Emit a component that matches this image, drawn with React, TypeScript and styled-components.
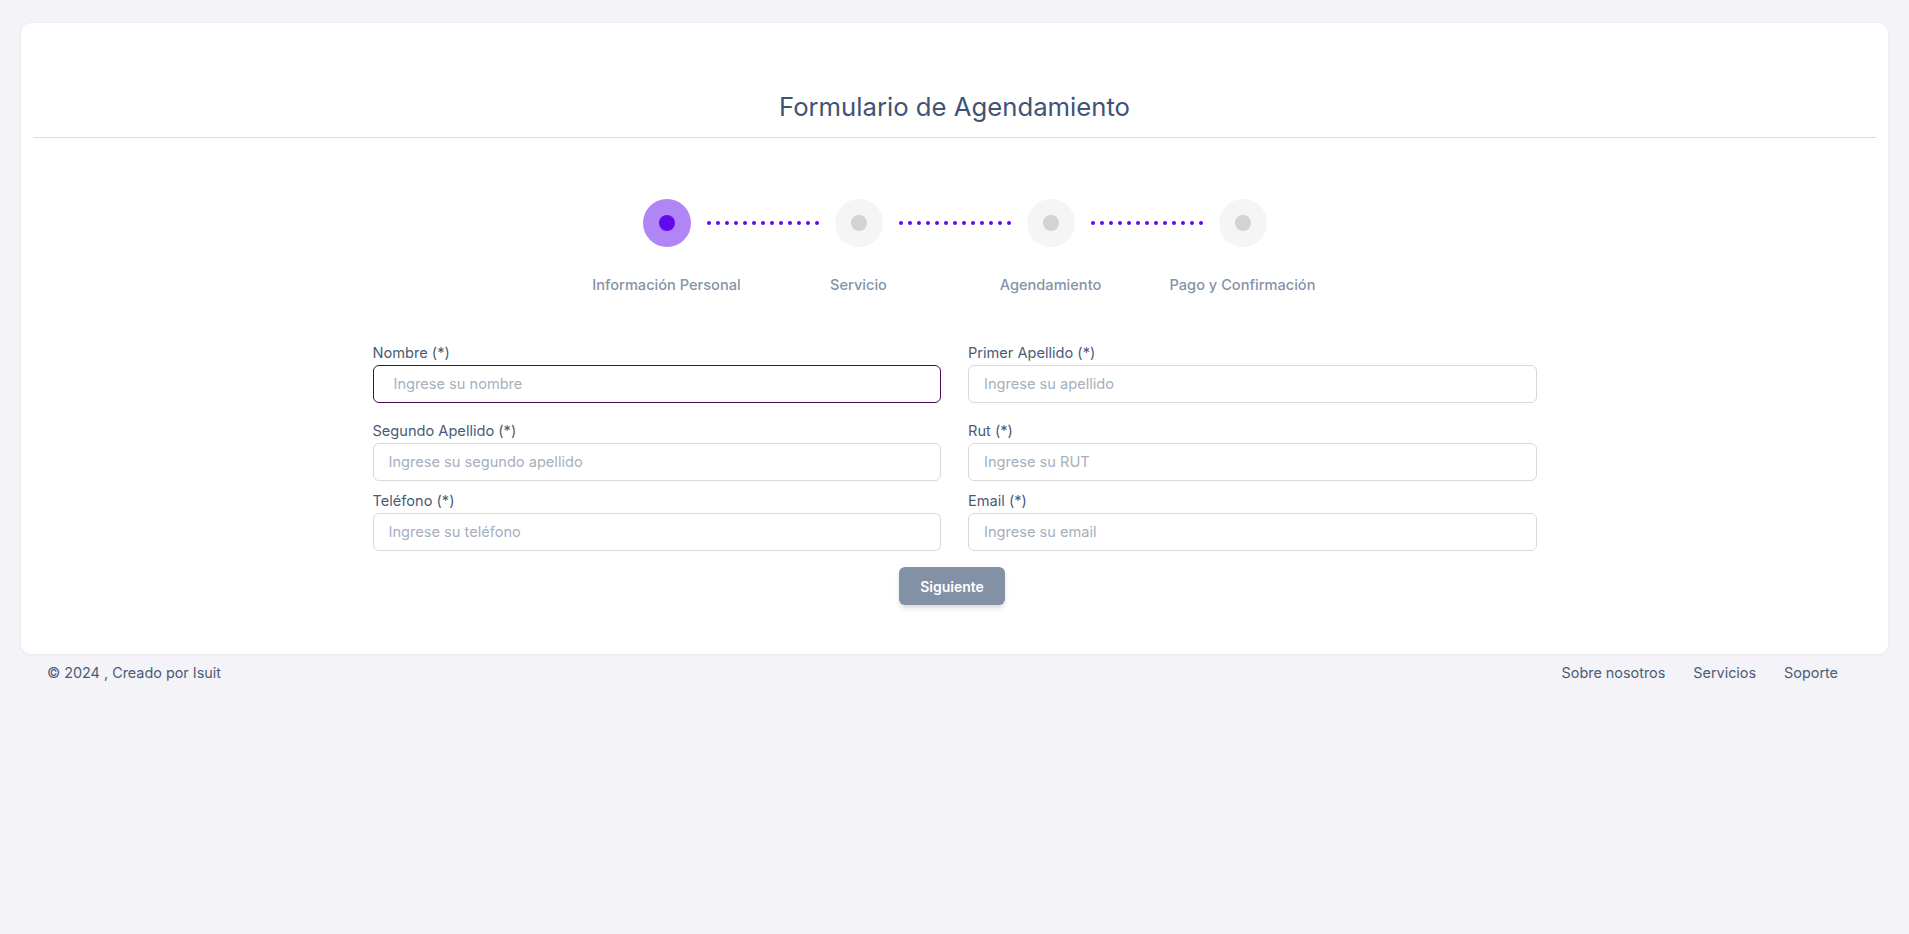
import React from "react";
import styled, { createGlobalStyle } from "styled-components";

const GlobalStyle = createGlobalStyle`
  html, body {
    margin: 0;
    padding: 0;
    background: #f3f3f8;
    font-family: Inter, "Noto Sans", "Liberation Sans", sans-serif;
  }
  * { box-sizing: border-box; }
`;

const Page = styled.div`
  min-height: 934px;
  padding: 23px 21px 0 21px;
  background: #f3f3f8;
`;

const Card = styled.main`
  background: #ffffff;
  border-radius: 10px;
  box-shadow: 0 1px 4px rgba(30, 40, 80, 0.06);
  padding: 67px 12px 49px 12px;
  display: flex;
  flex-direction: column;
  align-items: center;
`;

const Title = styled.h1`
  margin: 0 0 13px 0;
  font-size: 25.7px;
  line-height: 34px;
  font-weight: 400;
  color: #3f5475;
  text-align: center;
`;

const Divider = styled.hr`
  width: 100%;
  margin: 0;
  border: none;
  border-top: 1px solid #dcdde0;
`;

const StepperRow = styled.div`
  margin-top: 61px;
  display: flex;
  align-items: center;
`;

const StepCircle = styled.div<{ $active?: boolean }>`
  width: 48px;
  height: 48px;
  border-radius: 50%;
  background: ${(p) => (p.$active ? "#b086f6" : "#f5f5f6")};
  display: flex;
  align-items: center;
  justify-content: center;
`;

const StepDot = styled.div<{ $active?: boolean }>`
  width: 16px;
  height: 16px;
  border-radius: 50%;
  background: ${(p) => (p.$active ? "#6209ee" : "#d3d3d3")};
`;

const Connector = styled.div`
  width: 112px;
  margin: 0 16px;
  display: flex;
  justify-content: space-between;
  align-items: center;
`;

const ConnectorDot = styled.span`
  width: 4px;
  height: 4px;
  border-radius: 50%;
  background: #6408ef;
`;

const StepLabels = styled.div`
  margin-top: 28px;
  display: grid;
  grid-template-columns: repeat(4, 192px);
`;

const StepLabel = styled.span`
  text-align: center;
  font-size: 14.6px;
  line-height: 20px;
  font-weight: 500;
  color: #8693a8;
  white-space: nowrap;
`;

const Form = styled.form`
  margin-top: 48px;
  width: 1164px;
  display: flex;
  flex-direction: column;
`;

const Row = styled.div<{ $mb: number }>`
  display: grid;
  grid-template-columns: 1fr 1fr;
  column-gap: 27px;
  margin-bottom: ${(p) => p.$mb}px;
`;

const Field = styled.div`
  display: flex;
  flex-direction: column;
`;

const Label = styled.label`
  font-size: 14.6px;
  line-height: 20px;
  color: #4a5b75;
  margin-bottom: 2px;
`;

const Input = styled.input<{ $active?: boolean }>`
  height: 38px;
  width: 100%;
  border: 1px solid ${(p) => (p.$active ? "#4a0a5c" : "#d6d9de")};
  border-radius: 6px;
  padding: 0 ${(p) => (p.$active ? "20px" : "15px")};
  font-family: inherit;
  font-size: 14.6px;
  color: #43556f;
  background: #fff;
  outline: none;
  &::placeholder {
    color: #a5afbe;
  }
`;

const ButtonRow = styled.div`
  display: flex;
  justify-content: center;
`;

const Button = styled.button`
  height: 38px;
  padding: 0 21px;
  border: none;
  border-radius: 6px;
  background: #8391a6;
  color: #ffffff;
  font-family: inherit;
  font-size: 14px;
  font-weight: 600;
  box-shadow: 0 4px 6px -1px rgba(0, 0, 0, 0.12), 0 2px 4px -1px rgba(0, 0, 0, 0.07);
  margin-right: 5px;
  cursor: pointer;
`;

const Footer = styled.footer`
  margin-top: 9px;
  padding: 0 50px 0 26px;
  display: flex;
  justify-content: space-between;
  align-items: center;
  font-size: 14.4px;
  line-height: 20px;
  color: #4b5c77;
`;

const FooterLinks = styled.nav`
  display: flex;
  gap: 28px;
`;

const FooterLink = styled.a`
  color: #4b5c77;
  text-decoration: none;
`;

const steps = ["Información Personal", "Servicio", "Agendamiento", "Pago y Confirmación"];

const rows: { mb: number; fields: { label: string; placeholder: string; active?: boolean }[] }[] = [
  {
    mb: 18,
    fields: [
      { label: "Nombre (*)", placeholder: "Ingrese su nombre", active: true },
      { label: "Primer Apellido (*)", placeholder: "Ingrese su apellido" },
    ],
  },
  {
    mb: 10,
    fields: [
      { label: "Segundo Apellido (*)", placeholder: "Ingrese su segundo apellido" },
      { label: "Rut (*)", placeholder: "Ingrese su RUT" },
    ],
  },
  {
    mb: 16,
    fields: [
      { label: "Teléfono (*)", placeholder: "Ingrese su teléfono" },
      { label: "Email (*)", placeholder: "Ingrese su email" },
    ],
  },
];

export default function App() {
  return (
    <>
      <GlobalStyle />
      <Page>
        <Card>
          <Title>Formulario de Agendamiento</Title>
          <Divider />
          <StepperRow>
            {steps.map((s, i) => (
              <React.Fragment key={s}>
                <StepCircle $active={i === 0}>
                  <StepDot $active={i === 0} />
                </StepCircle>
                {i < steps.length - 1 && (
                  <Connector>
                    {Array.from({ length: 13 }).map((_, d) => (
                      <ConnectorDot key={d} />
                    ))}
                  </Connector>
                )}
              </React.Fragment>
            ))}
          </StepperRow>
          <StepLabels>
            {steps.map((s) => (
              <StepLabel key={s}>{s}</StepLabel>
            ))}
          </StepLabels>
          <Form onSubmit={(e) => e.preventDefault()}>
            {rows.map((r, ri) => (
              <Row key={ri} $mb={r.mb}>
                {r.fields.map((f) => (
                  <Field key={f.label}>
                    <Label>{f.label}</Label>
                    <Input placeholder={f.placeholder} $active={f.active} />
                  </Field>
                ))}
              </Row>
            ))}
            <ButtonRow>
              <Button type="submit">Siguiente</Button>
            </ButtonRow>
          </Form>
        </Card>
        <Footer>
          <span>© 2024 , Creado por Isuit</span>
          <FooterLinks>
            <FooterLink href="#">Sobre nosotros</FooterLink>
            <FooterLink href="#">Servicios</FooterLink>
            <FooterLink href="#">Soporte</FooterLink>
          </FooterLinks>
        </Footer>
      </Page>
    </>
  );
}
